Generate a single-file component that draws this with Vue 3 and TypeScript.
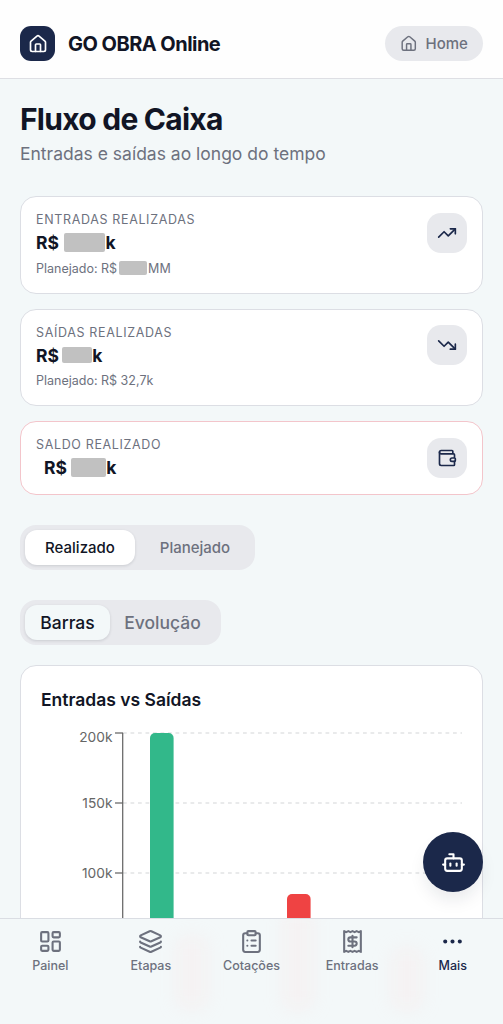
<script setup lang="ts">
import { ref } from 'vue'

interface Summary {
  label: string
  width: number
  height: number
  gap: number
  indent: boolean
  planned?: string
  plannedMasked?: boolean
  danger: boolean
  icon: string[]
}

const house = [
  'M15 21v-8a1 1 0 0 0-1-1h-4a1 1 0 0 0-1 1v8',
  'M3 10a2 2 0 0 1 .709-1.528l7-5.999a2 2 0 0 1 2.582 0l7 5.999A2 2 0 0 1 21 10v9a2 2 0 0 1-2 2H5a2 2 0 0 1-2-2z',
]

const summaries: Summary[] = [
  {
    label: 'ENTRADAS REALIZADAS', width: 41, height: 19, gap: 5, indent: false,
    planned: 'MM', plannedMasked: true, danger: false,
    icon: ['M22 7 13.5 15.5 8.5 10.5 2 17', 'M16 7h6v6'],
  },
  {
    label: 'SAÍDAS REALIZADAS', width: 29.5, height: 16, gap: 3.2, indent: false,
    planned: '32,7k', danger: false,
    icon: ['M22 17 13.5 8.5 8.5 13.5 2 7', 'M16 17h6v-6'],
  },
  {
    label: 'SALDO REALIZADO', width: 35.5, height: 19, gap: 3.7, indent: true, danger: true,
    icon: [
      'M19 7V4a1 1 0 0 0-1-1H5a2 2 0 0 0 0 4h15a1 1 0 0 1 1 1v4h-3a2 2 0 0 0 0 4h3a1 1 0 0 0 1-1v-2a1 1 0 0 0-1-1',
      'M3 5v14a2 2 0 0 0 2 2h15a1 1 0 0 0 1-1v-4',
    ],
  },
]

const mode = ref<'Realizado' | 'Planejado'>('Realizado')
const view = ref<'Barras' | 'Evolução'>('Barras')

const ticks = [
  { label: '200k', y: 13, textY: 22 },
  { label: '150k', y: 83, textY: 88 },
  { label: '100k', y: 153, textY: 158 },
]

const navItems = [
  {
    label: 'Painel',
    icon: ['M4 3h5a1 1 0 0 1 1 1v7a1 1 0 0 1-1 1H4a1 1 0 0 1-1-1V4a1 1 0 0 1 1-1z', 'M15 3h5a1 1 0 0 1 1 1v3a1 1 0 0 1-1 1h-5a1 1 0 0 1-1-1V4a1 1 0 0 1 1-1z', 'M15 12h5a1 1 0 0 1 1 1v7a1 1 0 0 1-1 1h-5a1 1 0 0 1-1-1v-7a1 1 0 0 1 1-1z', 'M4 16h5a1 1 0 0 1 1 1v3a1 1 0 0 1-1 1H4a1 1 0 0 1-1-1v-3a1 1 0 0 1 1-1z'],
  },
  {
    label: 'Etapas',
    icon: ['M12.83 2.18a2 2 0 0 0-1.66 0L2.6 6.08a1 1 0 0 0 0 1.83l8.58 3.91a2 2 0 0 0 1.66 0l8.58-3.9a1 1 0 0 0 0-1.83z', 'M2 12a1 1 0 0 0 .58.91l8.6 3.91a2 2 0 0 0 1.65 0l8.58-3.9A1 1 0 0 0 22 12', 'M2 17a1 1 0 0 0 .58.91l8.6 3.91a2 2 0 0 0 1.65 0l8.58-3.9A1 1 0 0 0 22 17'],
  },
  {
    label: 'Cotações',
    icon: ['M9 2h6a1 1 0 0 1 1 1v2a1 1 0 0 1-1 1H9a1 1 0 0 1-1-1V3a1 1 0 0 1 1-1z', 'M16 4h2a2 2 0 0 1 2 2v14a2 2 0 0 1-2 2H6a2 2 0 0 1-2-2V6a2 2 0 0 1 2-2h2', 'M12 11h4', 'M12 16h4', 'M8 11h.01', 'M8 16h.01'],
  },
  {
    label: 'Entradas',
    icon: ['M4 2v20l2-1 2 1 2-1 2 1 2-1 2 1 2-1 2 1V2l-2 1-2-1-2 1-2-1-2 1-2-1-2 1Z', 'M16 8h-6a2 2 0 1 0 0 4h4a2 2 0 1 1 0 4H8', 'M12 17.5v-11'],
  },
  {
    label: 'Mais', active: true,
    icon: ['M11 12a1 1 0 1 0 2 0a1 1 0 1 0-2 0', 'M18 12a1 1 0 1 0 2 0a1 1 0 1 0-2 0', 'M4 12a1 1 0 1 0 2 0a1 1 0 1 0-2 0'],
  },
]
</script>

<template>
  <div class="app">
    <header class="topbar">
      <div class="brand">
        <span class="logo">
          <svg class="icon i20" viewBox="0 0 24 24"><path v-for="d in house" :key="d" :d="d" /></svg>
        </span>
        <span class="brand-name">GO OBRA Online</span>
      </div>
      <button class="home">
        <svg class="icon i17" viewBox="0 0 24 24"><path v-for="d in house" :key="d" :d="d" /></svg>
        <span>Home</span>
      </button>
    </header>

    <main class="content">
      <h1>Fluxo de Caixa</h1>
      <p class="subtitle">Entradas e saídas ao longo do tempo</p>

      <section class="summaries">
        <article v-for="s in summaries" :key="s.label" class="card summary" :class="{ danger: s.danger }">
          <div>
            <div class="label">{{ s.label }}</div>
            <div class="value" :class="{ indent: s.indent }">
              <span>R$</span>
              <i class="mask" :style="{ width: s.width + 'px', height: s.height + 'px', marginLeft: s.gap + 'px' }" />
              <span>k</span>
            </div>
            <div v-if="s.planned" class="planned">
              <span>Planejado: R$</span>
              <i v-if="s.plannedMasked" class="mask small" />
              <span v-else class="space">&nbsp;</span>
              <span>{{ s.planned }}</span>
            </div>
          </div>
          <span class="badge">
            <svg class="icon i20" viewBox="0 0 24 24"><path v-for="d in s.icon" :key="d" :d="d" /></svg>
          </span>
        </article>
      </section>

      <div class="segmented modes">
        <button :class="{ on: mode === 'Realizado' }" @click="mode = 'Realizado'">Realizado</button>
        <button :class="{ on: mode === 'Planejado' }" @click="mode = 'Planejado'">Planejado</button>
      </div>

      <div class="segmented views">
        <button :class="{ on: view === 'Barras' }" @click="view = 'Barras'">Barras</button>
        <button :class="{ on: view === 'Evolução' }" @click="view = 'Evolução'">Evolução</button>
      </div>

      <section class="card chart">
        <h2>Entradas vs Saídas</h2>
        <svg class="plot" width="421" height="300" viewBox="0 0 421 300">
          <g v-for="t in ticks" :key="t.label">
            <line class="grid" x1="82" x2="421" :y1="t.y" :y2="t.y" />
            <line class="axis" x1="74" x2="82" :y1="t.y" :y2="t.y" />
            <text class="tick" x="71.5" :y="t.textY">{{ t.label }}</text>
          </g>
          <line class="axis" x1="81.7" x2="81.7" y1="13" y2="300" />
          <path class="income" d="M109 300V18a5 5 0 0 1 5-5h13.6a5 5 0 0 1 5 5V300z" />
          <path class="expense" d="M246 300V179a5 5 0 0 1 5-5h13.6a5 5 0 0 1 5 5V300z" />
        </svg>
      </section>
    </main>

    <button class="fab" aria-label="Assistente">
      <svg class="icon i25" viewBox="0 0 24 24">
        <path d="M12 8V4H8" /><rect width="16" height="12" x="4" y="8" rx="2" />
        <path d="M2 14h2" /><path d="M20 14h2" /><path d="M15 13v2" /><path d="M9 13v2" />
      </svg>
    </button>

    <nav class="tabbar">
      <i class="glow g1" /><i class="glow g2" /><i class="glow g3" />
      <a v-for="n in navItems" :key="n.label" :class="{ active: n.active }">
        <svg class="icon i25" viewBox="0 0 24 24"><path v-for="d in n.icon" :key="d" :d="d" /></svg>
        <span>{{ n.label }}</span>
      </a>
    </nav>
  </div>
</template>

<style>
body { margin: 0; background: #f3f8f9; }
</style>

<style scoped>
.app {
  position: relative;
  display: flex;
  flex-direction: column;
  width: 503px;
  height: 1024px;
  overflow: hidden;
  box-sizing: border-box;
  background: #f3f8f9;
  color: #111525;
  font-family: Inter, "Liberation Sans", sans-serif;
}
.app * { box-sizing: border-box; }
button { border: 0; padding: 0; margin: 0; font: inherit; background: none; color: inherit; }
.icon { display: block; flex: none; fill: none; stroke: currentColor; stroke-width: 2; stroke-linecap: round; stroke-linejoin: round; }
.i17 { width: 17.5px; height: 17.5px; }
.i20 { width: 20px; height: 20px; }
.i25 { width: 25px; height: 25px; }

.topbar {
  flex: none;
  display: flex;
  align-items: center;
  justify-content: space-between;
  height: 79px;
  padding: 9px 20px 0;
  background: #fefefe;
  border-bottom: 1.5px solid #dedfe4;
}
.brand { display: flex; align-items: center; gap: 13px; }
.logo { display: grid; place-items: center; width: 35px; height: 35px; border-radius: 11px; background: #1b284a; color: #fff; }
.brand-name { font-size: 20px; font-weight: 700; letter-spacing: -0.53px; }
.home {
  display: flex;
  align-items: center;
  justify-content: center;
  gap: 8px;
  width: 98px;
  height: 35px;
  border-radius: 18px;
  background: #e8e9ed;
  color: #6d717e;
  font-size: 15px;
  font-weight: 450;
}

.content { flex: 1; min-height: 0; overflow: hidden; padding: 20px 20px 0; }
h1 { margin: 0; font-size: 30px; line-height: 40px; font-weight: 700; letter-spacing: -0.75px; }
.subtitle { margin: 2px 0 0; font-size: 17.5px; line-height: 25px; color: #6d717e; }

.card { background: #fff; border: 1px solid #dcdee4; border-radius: 16px; }
.summaries { display: flex; flex-direction: column; gap: 15px; margin-top: 30px; }
.summary { display: flex; justify-content: space-between; height: 97px; padding: 15px 15px 0; }
.summary:first-child { height: 98px; }
.summary.danger { height: 74px; border-color: #f3c5cb; }
.label { font-size: 12.5px; line-height: 15px; letter-spacing: 0.65px; color: #6d717e; font-weight: 420; }
.value { display: flex; align-items: center; height: 24px; margin-top: 3px; font-size: 17.5px; font-weight: 700; }
.value.indent { padding-left: 8px; }
.mask { display: block; flex: none; border-radius: 2px; background: #c1c1c1; }
.value .mask { margin-right: 0.5px; }
.indent .mask { margin-right: 0; }
.mask.small { width: 28px; height: 14px; margin: 0 1px 0 2px; }
.planned { display: flex; align-items: center; height: 18px; margin-top: 5px; font-size: 12.5px; color: #6d717e; }
.summary:nth-child(2) .planned { margin-top: 4px; }
.badge { display: grid; place-items: center; width: 40px; height: 40px; margin-top: 1px; border-radius: 14px; background: #e8e9ed; color: #1b284a; }
.summary:nth-child(2) .badge { margin-top: 0; }

.segmented { display: flex; height: 45px; padding: 5px; border-radius: 16px; background: #e8e9ed; color: #6d717e; font-weight: 450; }
.segmented button { flex: none; height: 35px; border-radius: 12px; }
.segmented .on { color: #111525; font-weight: 500; box-shadow: 0 1px 3px rgba(20, 25, 45, 0.14); }
.modes { width: 235px; margin-top: 30px; font-size: 15px; }
.modes button { width: 110px; }
.modes button + button { width: 120px; }
.modes .on { background: #fff; }
.views { width: 201px; margin-top: 30px; font-size: 17.5px; }
.views button { width: 85px; }
.views button + button { width: 105px; }
.views .on { background: #f3f8f9; }

.chart { height: 400px; margin-top: 20px; padding: 20px; }
.chart h2 { margin: 0; height: 34px; font-size: 17.5px; line-height: 27px; font-weight: 600; }
.plot { display: block; }
.grid { stroke: #e2e3e5; stroke-width: 1.4; stroke-dasharray: 3.75 3.75; }
.axis { stroke: #666; stroke-width: 1.25; }
.tick { fill: #666; font-size: 13.75px; text-anchor: end; }
.income { fill: #32b88a; }
.expense { fill: #ef4343; }

.fab {
  position: absolute;
  left: 423px;
  top: 832px;
  display: grid;
  place-items: center;
  width: 60px;
  height: 60px;
  border-radius: 50%;
  background: #1b284a;
  color: #fff;
  box-shadow: 0 10px 18px -3px rgba(20, 25, 45, 0.1);
}

.tabbar {
  position: relative;
  flex: none;
  display: grid;
  grid-template-columns: repeat(5, 1fr);
  height: 106px;
  padding-top: 10px;
  overflow: hidden;
  background: #f3f8f9;
  border-top: 1px solid #dadde3;
}
.tabbar a { position: relative; display: flex; flex-direction: column; align-items: center; color: #6d717e; font-size: 12.5px; line-height: 18px; font-weight: 450; }
.tabbar a span { margin-top: 3px; }
.tabbar a.active { color: #1b284a; font-weight: 550; }
.glow { position: absolute; width: 32px; border-radius: 12px; background: rgba(255, 220, 220, 0.2); filter: blur(9px); }
.g1 { left: 176px; top: 16px; height: 75px; }
.g2 { left: 282px; top: -10px; height: 102px; }
.g3 { left: 391px; top: 28px; height: 64px; }
</style>
